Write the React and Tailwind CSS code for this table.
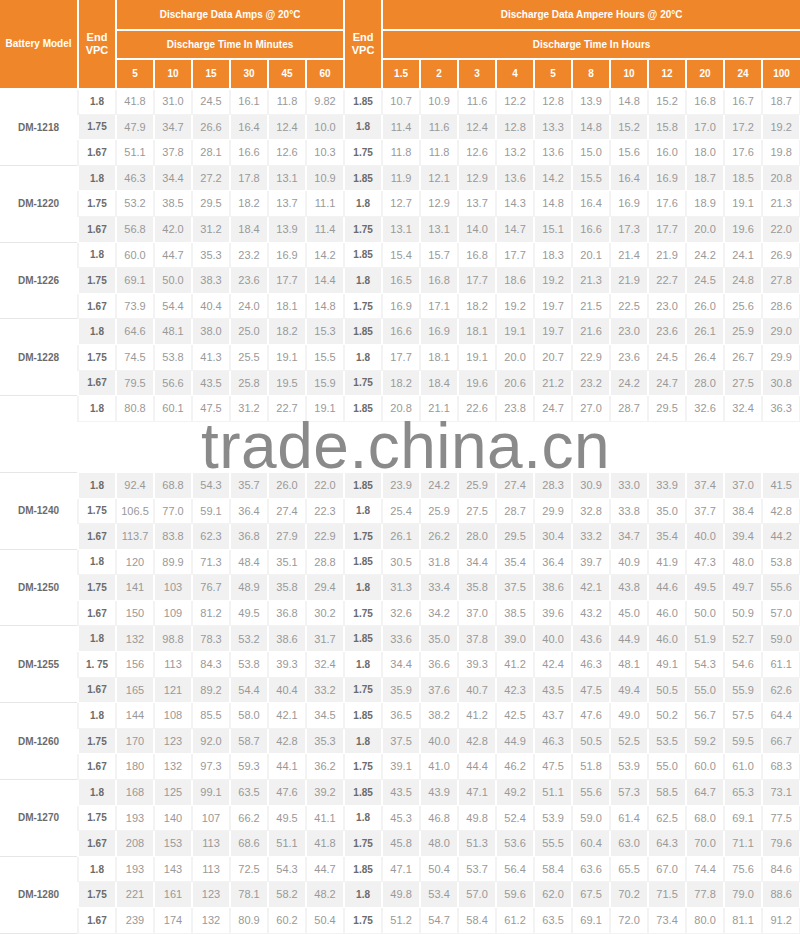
import React from "react";

const groups = [
  {
    model: "DM-1218",
    rows: [
      ["1.8", "41.8 31.0 24.5 16.1 11.8 9.82", "1.85", "10.7 10.9 11.6 12.2 12.8 13.9 14.8 15.2 16.8 16.7 18.7"],
      ["1.75", "47.9 34.7 26.6 16.4 12.4 10.0", "1.8", "11.4 11.6 12.4 12.8 13.3 14.8 15.2 15.8 17.0 17.2 19.2"],
      ["1.67", "51.1 37.8 28.1 16.6 12.6 10.3", "1.75", "11.8 11.8 12.6 13.2 13.6 15.0 15.6 16.0 18.0 17.6 19.8"],
    ],
  },
  {
    model: "DM-1220",
    rows: [
      ["1.8", "46.3 34.4 27.2 17.8 13.1 10.9", "1.85", "11.9 12.1 12.9 13.6 14.2 15.5 16.4 16.9 18.7 18.5 20.8"],
      ["1.75", "53.2 38.5 29.5 18.2 13.7 11.1", "1.8", "12.7 12.9 13.7 14.3 14.8 16.4 16.9 17.6 18.9 19.1 21.3"],
      ["1.67", "56.8 42.0 31.2 18.4 13.9 11.4", "1.75", "13.1 13.1 14.0 14.7 15.1 16.6 17.3 17.7 20.0 19.6 22.0"],
    ],
  },
  {
    model: "DM-1226",
    rows: [
      ["1.8", "60.0 44.7 35.3 23.2 16.9 14.2", "1.85", "15.4 15.7 16.8 17.7 18.3 20.1 21.4 21.9 24.2 24.1 26.9"],
      ["1.75", "69.1 50.0 38.3 23.6 17.7 14.4", "1.8", "16.5 16.8 17.7 18.6 19.2 21.3 21.9 22.7 24.5 24.8 27.8"],
      ["1.67", "73.9 54.4 40.4 24.0 18.1 14.8", "1.75", "16.9 17.1 18.2 19.2 19.7 21.5 22.5 23.0 26.0 25.6 28.6"],
    ],
  },
  {
    model: "DM-1228",
    rows: [
      ["1.8", "64.6 48.1 38.0 25.0 18.2 15.3", "1.85", "16.6 16.9 18.1 19.1 19.7 21.6 23.0 23.6 26.1 25.9 29.0"],
      ["1.75", "74.5 53.8 41.3 25.5 19.1 15.5", "1.8", "17.7 18.1 19.1 20.0 20.7 22.9 23.6 24.5 26.4 26.7 29.9"],
      ["1.67", "79.5 56.6 43.5 25.8 19.5 15.9", "1.75", "18.2 18.4 19.6 20.6 21.2 23.2 24.2 24.7 28.0 27.5 30.8"],
    ],
  },
  {
    model: "",
    rows: [
      ["1.8", "80.8 60.1 47.5 31.2 22.7 19.1", "1.85", "20.8 21.1 22.6 23.8 24.7 27.0 28.7 29.5 32.6 32.4 36.3"],
      null,
      null,
    ],
  },
  {
    model: "DM-1240",
    rows: [
      ["1.8", "92.4 68.8 54.3 35.7 26.0 22.0", "1.85", "23.9 24.2 25.9 27.4 28.3 30.9 33.0 33.9 37.4 37.0 41.5"],
      ["1.75", "106.5 77.0 59.1 36.4 27.4 22.3", "1.8", "25.4 25.9 27.5 28.7 29.9 32.8 33.8 35.0 37.7 38.4 42.8"],
      ["1.67", "113.7 83.8 62.3 36.8 27.9 22.9", "1.75", "26.1 26.2 28.0 29.5 30.4 33.2 34.7 35.4 40.0 39.4 44.2"],
    ],
  },
  {
    model: "DM-1250",
    rows: [
      ["1.8", "120 89.9 71.3 48.4 35.1 28.8", "1.85", "30.5 31.8 34.4 35.4 36.4 39.7 40.9 41.9 47.3 48.0 53.8"],
      ["1.75", "141 103 76.7 48.9 35.8 29.4", "1.8", "31.3 33.4 35.8 37.5 38.6 42.1 43.8 44.6 49.5 49.7 55.6"],
      ["1.67", "150 109 81.2 49.5 36.8 30.2", "1.75", "32.6 34.2 37.0 38.5 39.6 43.2 45.0 46.0 50.0 50.9 57.0"],
    ],
  },
  {
    model: "DM-1255",
    rows: [
      ["1.8", "132 98.8 78.3 53.2 38.6 31.7", "1.85", "33.6 35.0 37.8 39.0 40.0 43.6 44.9 46.0 51.9 52.7 59.0"],
      ["1. 75", "156 113 84.3 53.8 39.3 32.4", "1.8", "34.4 36.6 39.3 41.2 42.4 46.3 48.1 49.1 54.3 54.6 61.1"],
      ["1.67", "165 121 89.2 54.4 40.4 33.2", "1.75", "35.9 37.6 40.7 42.3 43.5 47.5 49.4 50.5 55.0 55.9 62.6"],
    ],
  },
  {
    model: "DM-1260",
    rows: [
      ["1.8", "144 108 85.5 58.0 42.1 34.5", "1.85", "36.5 38.2 41.2 42.5 43.7 47.6 49.0 50.2 56.7 57.5 64.4"],
      ["1.75", "170 123 92.0 58.7 42.8 35.3", "1.8", "37.5 40.0 42.8 44.9 46.3 50.5 52.5 53.5 59.2 59.5 66.7"],
      ["1.67", "180 132 97.3 59.3 44.1 36.2", "1.75", "39.1 41.0 44.4 46.2 47.5 51.8 53.9 55.0 60.0 61.0 68.3"],
    ],
  },
  {
    model: "DM-1270",
    rows: [
      ["1.8", "168 125 99.1 63.5 47.6 39.2", "1.85", "43.5 43.9 47.1 49.2 51.1 55.6 57.3 58.5 64.7 65.3 73.1"],
      ["1.75", "193 140 107 66.2 49.5 41.1", "1.8", "45.3 46.8 49.8 52.4 53.9 59.0 61.4 62.5 68.0 69.1 77.5"],
      ["1.67", "208 153 113 68.6 51.1 41.8", "1.75", "45.8 48.0 51.3 53.6 55.5 60.4 63.0 64.3 70.0 71.1 79.6"],
    ],
  },
  {
    model: "DM-1280",
    rows: [
      ["1.8", "193 143 113 72.5 54.3 44.7", "1.85", "47.1 50.4 53.7 56.4 58.4 63.6 65.5 67.0 74.4 75.6 84.6"],
      ["1.75", "221 161 123 78.1 58.2 48.2", "1.8", "49.8 53.4 57.0 59.6 62.0 67.5 70.2 71.5 77.8 79.0 88.6"],
      ["1.67", "239 174 132 80.9 60.2 50.4", "1.75", "51.2 54.7 58.4 61.2 63.5 69.1 72.0 73.4 80.0 81.1 91.2"],
    ],
  },
];

const minutes = ["5", "10", "15", "30", "45", "60"];
const hours = ["1.5", "2", "3", "4", "5", "8", "10", "12", "20", "24", "100"];

const th = "border-2 border-white bg-[#f0862a] text-white font-bold text-[10px] text-center align-middle";

function BodyRow({ group, row, ri, index }) {
  const stripe = index % 2 === 1;
  const cell = `border-x-2 border-y ${
    stripe ? "bg-[#f1f1f1] border-white" : "bg-white border-[#f3f3f3]"
  } text-center align-middle`;

  return (
    <tr className="h-[25.6px]">
      {ri === 0 && (
        <td
          rowSpan={3}
          className="bg-white border-b border-[#e6e6e6] text-center align-middle text-[10px] font-bold text-[#6b6b6b]"
        >
          {group.model}
        </td>
      )}
      {row ? (
        <>
          <td className={`${cell} text-[10px] font-bold text-[#6b6b6b]`}>{row[0]}</td>
          {row[1].split(" ").map((v, i) => (
            <td key={"a" + i} className={`${cell} text-[11px] text-[#999]`}>
              {v}
            </td>
          ))}
          <td className={`${cell} text-[10px] font-bold text-[#6b6b6b]`}>{row[2]}</td>
          {row[3].split(" ").map((v, i) => (
            <td key={"h" + i} className={`${cell} text-[11px] text-[#999]`}>
              {v}
            </td>
          ))}
        </>
      ) : (
        // rows blurred out under the watermark
        Array.from({ length: 19 }).map((_, i) => <td key={i} className="bg-white"></td>)
      )}
    </tr>
  );
}

export default function App() {
  let index = 0;

  return (
    <div className="relative w-[800px] h-[934px] overflow-hidden bg-white font-['Liberation_Sans',Arial,sans-serif]">
      <table className="w-[800px] table-fixed border-collapse">
        <colgroup>
          <col className="w-[78px]" />
          {Array.from({ length: 19 }).map((_, i) => (
            <col key={i} className="w-[38px]" />
          ))}
        </colgroup>
        <thead>
          <tr className="h-[29.5px]">
            <th rowSpan={3} className={`${th} border-l-0 border-t-0`}>
              Battery Model
            </th>
            <th rowSpan={3} className={`${th} border-t-0 text-[11px] leading-[13px]`}>
              End
              <br />
              VPC
            </th>
            <th colSpan={6} className={`${th} border-t-0`}>
              Discharge Data Amps @ 20°C
            </th>
            <th rowSpan={3} className={`${th} border-t-0 text-[11px] leading-[13px]`}>
              End
              <br />
              VPC
            </th>
            <th colSpan={11} className={`${th} border-t-0 border-r-0`}>
              Discharge Data Ampere Hours @ 20°C
            </th>
          </tr>
          <tr className="h-[29.5px]">
            <th colSpan={6} className={th}>
              Discharge Time In Minutes
            </th>
            <th colSpan={11} className={`${th} border-r-0`}>
              Discharge Time In Hours
            </th>
          </tr>
          <tr className="h-[29.5px]">
            {minutes.map((m) => (
              <th key={m} className={th}>
                {m}
              </th>
            ))}
            {hours.map((h, i) => (
              <th key={h} className={`${th} ${i === hours.length - 1 ? "border-r-0" : ""}`}>
                {h}
              </th>
            ))}
          </tr>
        </thead>
        <tbody>
          {groups.map((g) =>
            g.rows.map((r, ri) => (
              <BodyRow key={g.model + ri + index} group={g} row={r} ri={ri} index={index++} />
            ))
          )}
        </tbody>
      </table>

      {/* watermark over the hidden group */}
      <div className="pointer-events-none absolute left-[201px] top-[414px] text-[64px] leading-none tracking-[0.5px] text-[#8a8a8a] font-['Liberation_Sans',Arial,sans-serif]">
        trade.china.cn
      </div>
    </div>
  );
}
